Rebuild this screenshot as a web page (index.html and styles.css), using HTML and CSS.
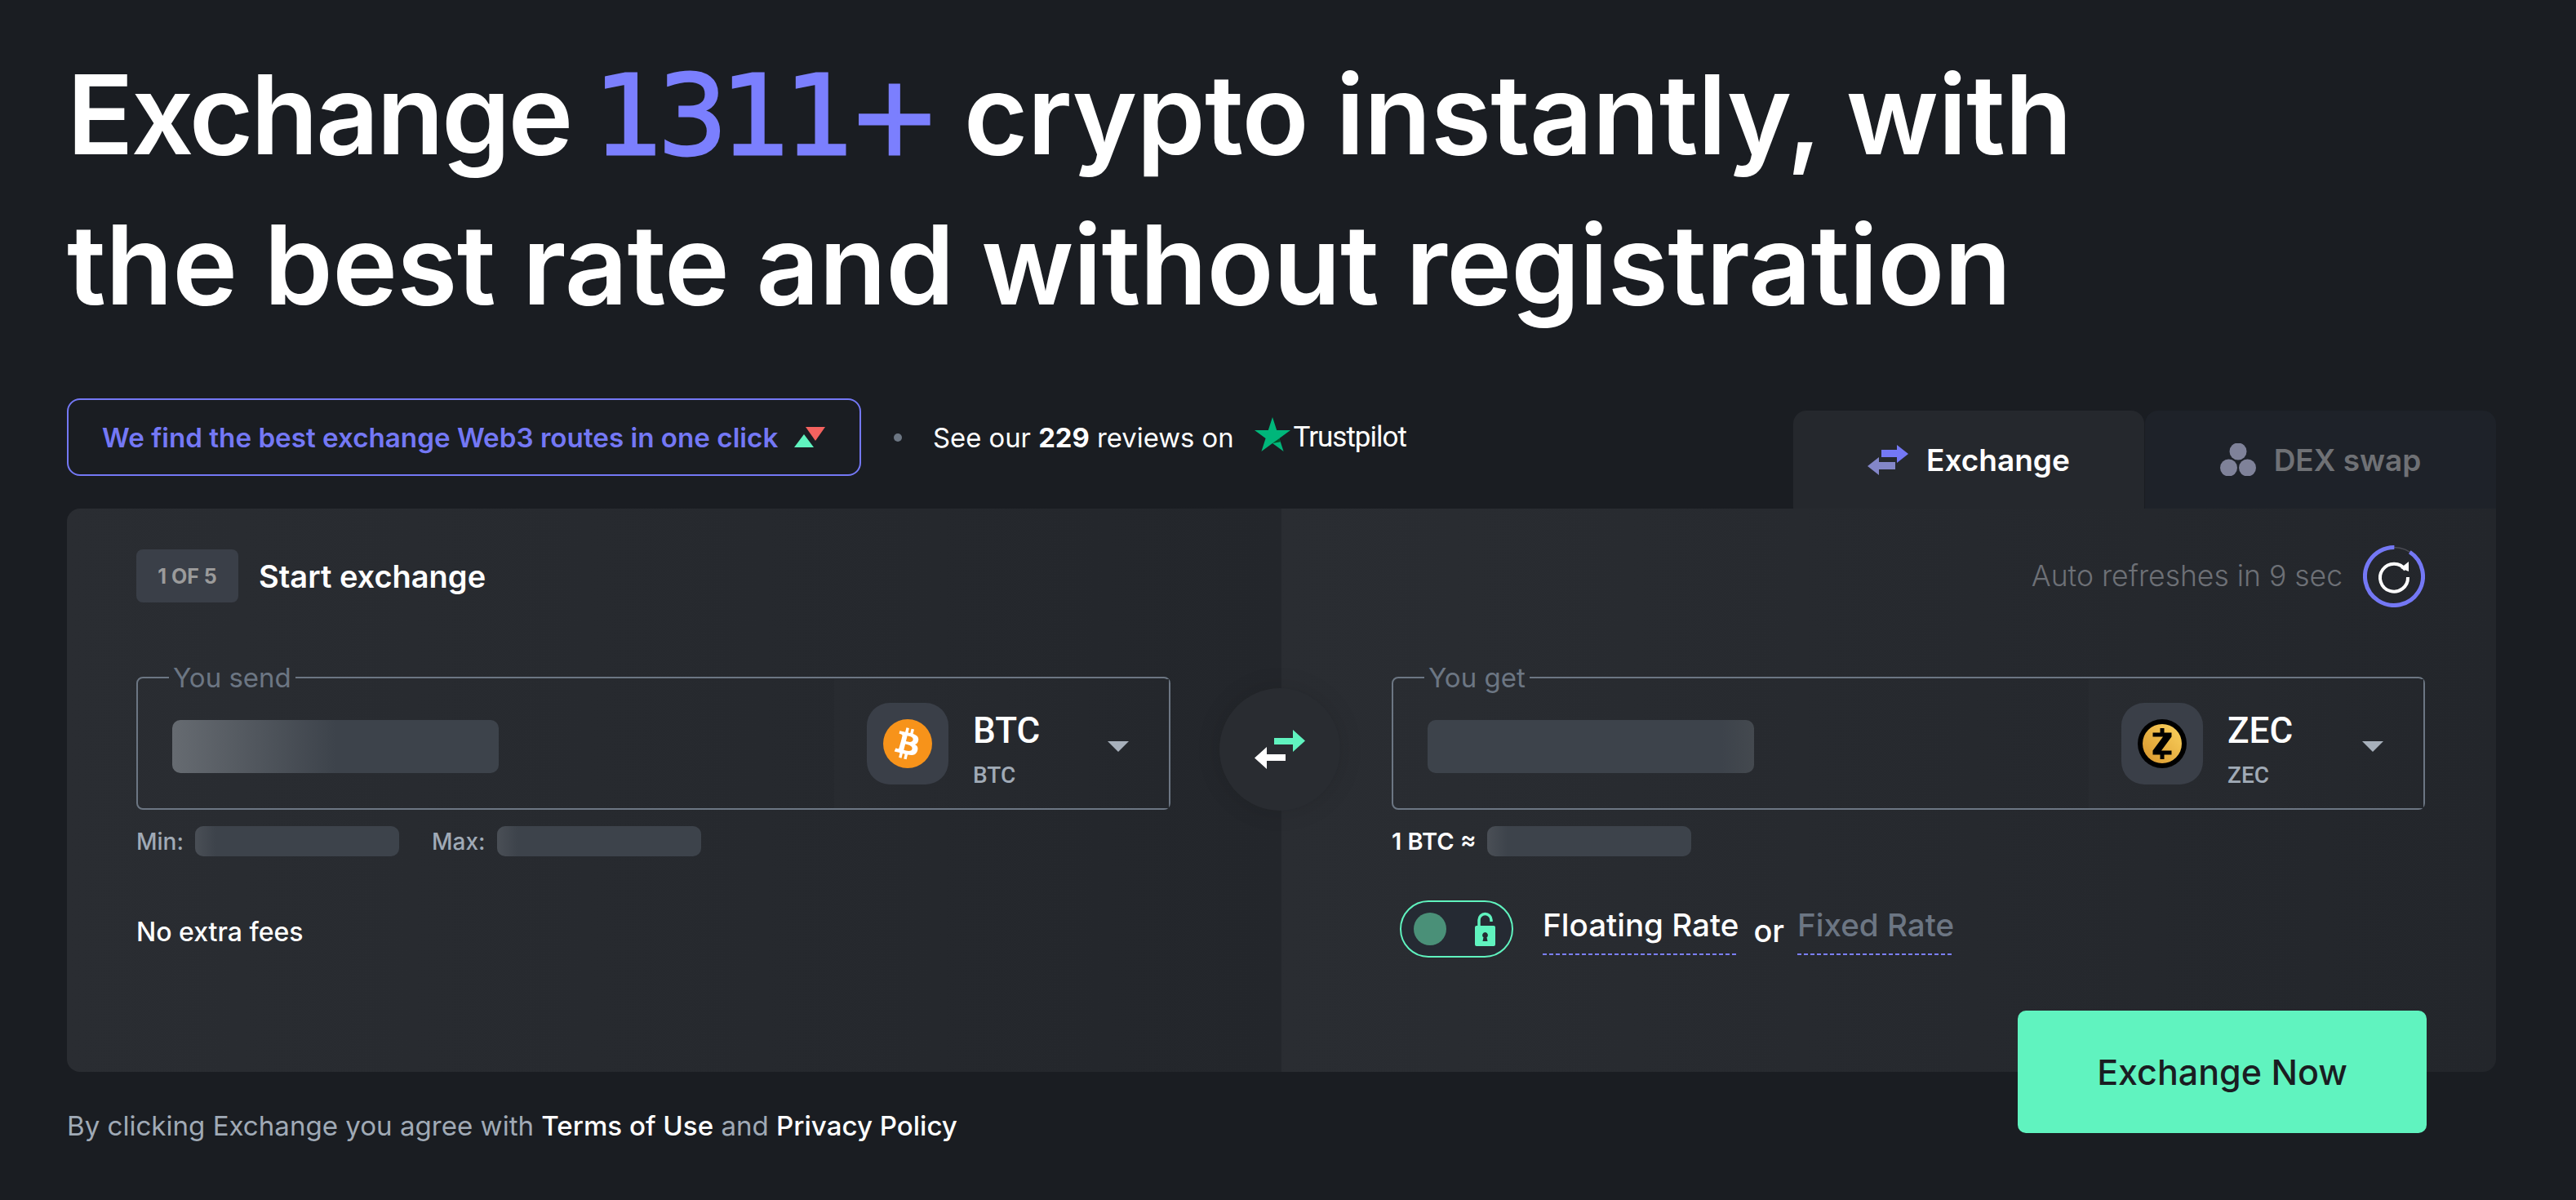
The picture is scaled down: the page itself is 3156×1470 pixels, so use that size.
FILE: index.html
```html
<!DOCTYPE html>
<html lang="en">

<head>
    <meta charset="UTF-8">
    <meta name="viewport" content="width=device-width, initial-scale=1.0">
    <title>Exchange crypto</title>
    <link rel="stylesheet" href="styles.css">
</head>

<body>
    <main class="page">
        <h1 class="headline"><span class="headline-first">Exchange</span> <span class="headline-num">1311+</span> crypto instantly, with<br>the best rate and without registration</h1>

        <!-- Promo and tabs -->
        <div class="top-row">
            <div class="promo">
                <a class="promo-pill" href="#">
                    We find the best exchange Web3 routes in one click
                    <svg class="promo-icon" width="38" height="25" viewBox="0 0 38 25">
                        <polygon points="14,0 38,0 26,17" fill="#f4625f"/>
                        <polygon points="12,9 24,25 0,25" fill="#60f3bf"/>
                    </svg>
                </a>
                <span class="dot"></span>
                <span class="reviews">See our <b>229</b> reviews on</span>
                <svg class="tp-star" width="44" height="42" viewBox="0 0 44 42">
                    <polygon points="22,0 27.2,16 44,16 30.4,25.9 35.6,42 22,32 8.4,42 13.6,25.9 0,16 16.8,16" fill="#00b67a"/>
                    <polygon points="30.400,25.900 31.800,30.200 22,32" fill="#005128"/>
                </svg>
                <span class="tp-name">Trustpilot</span>
            </div>
            <div class="tabs">
                <a class="tab tab-active" href="#">
                    <svg width="50" height="37" viewBox="0 0 50 37">
                        <polygon points="17,6 36,6 36,0 50,11 36,22 36,15 17,15" fill="#7478f5"/>
                        <polygon points="34,21 14,21 14,15 0,26 14,37 14,30 34,30" fill="#8386c8"/>
                    </svg>
                    Exchange
                </a>
                <a class="tab" href="#">
                    <svg width="44" height="40" viewBox="0 0 44 40">
                        <circle cx="22" cy="10" r="10.5" fill="#7f8299"/>
                        <circle cx="10.5" cy="30" r="10.5" fill="#7f8299"/>
                        <circle cx="33.5" cy="30" r="10.5" fill="#7f8299"/>
                    </svg>
                    DEX swap
                </a>
            </div>
        </div>

        <section class="panel">
            <div class="col col-left">
                <div class="col-head">
                    <span class="step">1 OF 5</span>
                    <span class="step-title">Start exchange</span>
                </div>

                <fieldset class="field">
                    <legend>You send</legend>
                    <div class="field-body">
                        <div class="amount"><span class="blur blur-big blur-fade"></span></div>
                        <div class="coin">
                            <span class="coin-box">
                                <svg width="60" height="60" viewBox="0 0 64 64">
                                    <circle cx="32" cy="32" r="32" fill="#f7931a"/>
                                    <path d="M46.1 27.4c.6-4.3-2.6-6.6-7.1-8.1l1.5-5.9-3.6-.9-1.4 5.7c-.9-.2-1.9-.5-2.9-.7l1.4-5.7-3.6-.9-1.5 5.900c-.8-.2-1.500-.4-2.300-.5l-4.900-1.200-.9 3.800s2.600.6 2.600.7c1.500.4 1.700 1.300 1.700 2.100l-1.700 6.700-2.700 9.400c-.2.4-.6 1.100-1.700.8 0 .1-2.600-.7-2.600-.7l-1.800 4.100 4.700 1.200c.9.2 1.700.4 2.600.7l-1.500 6 3.600.9 1.500-5.900c1 .3 1.900.5 2.900.8l-1.500 5.900 3.600.9 1.500-6c6.100 1.200 10.700.7 12.700-4.800 1.600-4.400-.1-7-3.300-8.600 2.300-.5 4.100-2.100 4.600-5.300zm-8.200 11.500c-1.100 4.400-8.600 2-11 1.400l2-7.900c2.400.6 10.200 1.800 9 6.500zm1.100-11.600c-1 4-7.200 2-9.200 1.500l1.800-7.100c2 .5 8.500 1.400 7.400 5.600z" fill="#fff"/>
                                </svg>
                            </span>
                            <span class="coin-text">
                                <span class="coin-code">BTC</span>
                                <span class="coin-net">BTC</span>
                            </span>
                            <span class="caret"></span>
                        </div>
                    </div>
                </fieldset>

                <div class="limits">
                    <span>Min:</span><span class="blur blur-small blur-edge"></span>
                    <span class="limit-max">Max:</span><span class="blur blur-small blur-edge"></span>
                </div>

                <p class="fees">No extra fees</p>
            </div>

            <div class="col col-right">
                <div class="col-head col-head-right">
                    <span class="refresh-text">Auto refreshes in 9 sec</span>
                    <svg class="refresh" width="76" height="76" viewBox="0 0 76 76">
                        <circle cx="38" cy="38" r="35.5" fill="none" stroke="#4b4c55" stroke-width="1.5"/>
                        <circle cx="38" cy="38" r="35.5" fill="none" stroke="#7478f5" stroke-width="5" pathLength="100" stroke-dasharray="91 9" transform="rotate(-57 38 38)"/>
                        <path d="M52 30a17 17 0 1 0 3 9" fill="none" stroke="#fff" stroke-width="4"/>
                        <polygon points="46,28 56,20 56,32" fill="#fff"/>
                    </svg>
                </div>

                <fieldset class="field">
                    <legend>You get</legend>
                    <div class="field-body">
                        <div class="amount"><span class="blur blur-big blur-fade-right"></span></div>
                        <div class="coin">
                            <span class="coin-box">
                                <svg width="60" height="60" viewBox="0 0 60 60">
                                    <defs>
                                        <linearGradient id="zecGold" x1="0" y1="1" x2="1" y2="0">
                                            <stop offset="0" stop-color="#d9952b"/>
                                            <stop offset="1" stop-color="#fbd35f"/>
                                        </linearGradient>
                                    </defs>
                                    <circle cx="30" cy="30" r="30" fill="#000"/>
                                    <circle cx="30" cy="30" r="24" fill="url(#zecGold)"/>
                                    <path d="M27.500 11h5v5.500h9v5L29 38.500h12.500v5h-9V49h-5v-5.500h-9v-5L31 21.500H18.500v-5h9z" fill="#000"/>
                                </svg>
                            </span>
                            <span class="coin-text">
                                <span class="coin-code">ZEC</span>
                                <span class="coin-net">ZEC</span>
                            </span>
                            <span class="caret"></span>
                        </div>
                    </div>
                </fieldset>

                <div class="limits">
                    <span class="rate-label">1 BTC ≈</span><span class="blur blur-small blur-edge"></span>
                </div>

                <div class="rate-row">
                    <span class="toggle">
                        <span class="knob"></span>
                        <svg width="25" height="42" viewBox="0 0 25 42">
                            <path d="M5 20V10a7.500 7.500 0 0 1 15 0v2" fill="none" stroke="#60f3bf" stroke-width="3.500"/>
                            <path fill-rule="evenodd" d="M2 17h21a2 2 0 0 1 2 2v21a2 2 0 0 1-2 2H2a2 2 0 0 1-2-2V19a2 2 0 0 1 2-2zm10.500 8a3.500 3.500 0 0 0-2 6.300L9.500 36h6l-1-4.700a3.500 3.500 0 0 0-2-6.300z" fill="#60f3bf"/>
                        </svg>
                    </span>
                    <a class="rate rate-on" href="#">Floating Rate</a>
                    <span class="rate-or">or</span>
                    <a class="rate rate-off" href="#">Fixed Rate</a>
                </div>
            </div>

            <button class="swap" type="button">
                <svg width="62" height="48" viewBox="0 0 62 48">
                    <polygon points="24,10 47,10 47,0 62,13.500 47,27 47,18 24,18" fill="#60f3bf"/>
                    <polygon points="38,30 15,30 15,21 0,34.500 15,48 15,38 38,38" fill="#fff"/>
                </svg>
            </button>
        </section>

        <div class="bottom-row">
            <p class="terms">By clicking Exchange you agree with <a href="#">Terms of Use</a> and <a href="#">Privacy Policy</a></p>
            <button class="submit" type="button">Exchange Now</button>
        </div>
    </main>
</body>

</html>
```
FILE: styles.css
```css
body {
    margin: 0;
    background-color: #1a1d22;
    color: #fff;
    font-family: 'Inter', 'Liberation Sans', sans-serif;
}

a {
    color: inherit;
    text-decoration: none;
}

.page {
    padding: 48px 98px 0 82px;
}

.headline {
    margin: 0;
    height: 362px;
    font-size: 135px;
    line-height: 184px;
    font-weight: 560;
    letter-spacing: -0.7px;
    white-space: nowrap;
}

.headline-first {
    letter-spacing: -3px;
}

.headline-num {
    margin: 0 3px 0 -5px;
    color: #7b7ffe;
    font-family: 'DejaVu Sans', sans-serif;
    font-weight: 400;
    letter-spacing: -8px;
    line-height: 0;
    -webkit-text-stroke: 3px #7b7ffe;
}

.top-row {
    display: flex;
    justify-content: space-between;
    height: 135px;
    margin-top: 78px;
}

.promo {
    display: flex;
    align-items: center;
    align-self: flex-start;
    height: 95px;
}

.promo-pill {
    display: flex;
    align-items: center;
    box-sizing: border-box;
    width: 973px;
    height: 95px;
    padding-left: 41px;
    border: 2px solid #7478f5;
    border-radius: 16px;
    color: #7478f5;
    font-size: 33.2px;
    font-weight: 600;
    white-space: nowrap;
}

.promo-icon {
    margin-left: 20px;
}

.dot {
    width: 10px;
    height: 10px;
    margin: 0 38px 0 40px;
    border-radius: 50%;
    background-color: #6c7683;
}

.reviews {
    font-size: 32.8px;
    white-space: nowrap;
}

.tp-star {
    margin: 0 4px 8px 25px;
}

.tp-name {
    font-family: 'Roboto', sans-serif;
    font-size: 35px;
    font-weight: 400;
    letter-spacing: -1px;
}

.tabs {
    display: flex;
    align-self: flex-end;
    gap: 1px;
    height: 120px;
}

.tab {
    display: flex;
    align-items: center;
    justify-content: center;
    gap: 22px;
    box-sizing: border-box;
    width: 430px;
    height: 120px;
    border-radius: 16px 16px 0 0;
    background-color: #1e2229;
    color: #6f7175;
    font-size: 37px;
    font-weight: 600;
}

.tab-active {
    background-color: #25282d;
    color: #fff;
}

.panel {
    position: relative;
    display: grid;
    grid-template-columns: 1488px 1488px;
    height: 690px;
    border-radius: 16px 0 16px 16px;
    overflow: hidden;
}

.col {
    box-sizing: border-box;
    padding-top: 50px;
    background: linear-gradient(90deg, #2a2d32, #23262b);
}

.col-left {
    padding-left: 85px;
    padding-right: 136px;
}

.col-right {
    padding-left: 135px;
    padding-right: 87px;
}

.col-head {
    display: flex;
    align-items: center;
    height: 65px;
}

.col-head-right {
    justify-content: flex-end;
}

.step {
    display: flex;
    align-items: center;
    justify-content: center;
    width: 125px;
    height: 65px;
    margin-right: 25px;
    border-radius: 8px;
    background-color: #3a3f48;
    color: #9b9b9b;
    font-size: 25px;
    font-weight: 700;
}

.step-title {
    font-size: 38px;
    font-weight: 600;
}

.refresh-text {
    margin-right: 25px;
    color: #6d7076;
    font-size: 35.5px;
    font-weight: 300;
}

.refresh {
    flex: none;
}

.field {
    box-sizing: border-box;
    height: 179px;
    margin: 75px 0 0;
    padding: 0;
    border: 2px solid #6c7683;
    border-radius: 8px;
    background: none;
}

.field legend {
    margin-left: 38px;
    padding: 0 5px;
    color: #6c7683;
    font-size: 33px;
    line-height: 34px;
}

.field-body {
    display: flex;
    justify-content: space-between;
    height: 158px;
    margin-top: -15px;
}

.amount {
    display: flex;
    align-items: center;
    padding: 6px 0 0 42px;
}

.blur {
    display: block;
    border-radius: 10px;
    background-color: #3d434b;
}

.blur-big {
    width: 400px;
    height: 65px;
}

.blur-small {
    width: 250px;
    height: 37px;
}

.blur-fade {
    background: linear-gradient(90deg, #666b71, #3d434b 50%);
}

.blur-fade-right {
    background: linear-gradient(90deg, #3d434b 90%, #44494f);
}

.blur-edge {
    background: linear-gradient(90deg, #4a4f56, #3d434b 10%);
}

.coin {
    display: flex;
    align-items: center;
    box-sizing: border-box;
    width: 410px;
    padding-left: 40px;
    background: linear-gradient(90deg, #282b30, #24272c);
}

.coin-box {
    display: flex;
    align-items: center;
    justify-content: center;
    width: 100px;
    height: 100px;
    border-radius: 28px;
    background-color: #3a3f48;
}

.coin-text {
    display: flex;
    flex-direction: column;
    width: 165px;
    margin-left: 30px;
    padding-top: 14px;
    font-family: 'Roboto', sans-serif;
}

.coin-code {
    font-size: 44px;
    font-weight: 500;
    line-height: 52px;
}

.coin-net {
    margin-top: 12px;
    color: #a0aab6;
    font-size: 28px;
    font-weight: 500;
    line-height: 34px;
}

.caret {
    width: 0;
    height: 0;
    margin-top: 6px;
    border-top: 13px solid #a7b0bb;
    border-left: 13px solid transparent;
    border-right: 13px solid transparent;
}

.limits {
    display: flex;
    align-items: center;
    height: 37px;
    margin-top: 20px;
    color: #a0aab6;
    font-size: 28px;
    font-weight: 500;
}

.limits .blur {
    margin-left: 14px;
}

.limit-max {
    margin-left: 40px;
}

.rate-label {
    color: #fff;
    font-size: 29px;
    font-weight: 600;
}

.fees {
    margin: 73px 0 0;
    font-size: 32px;
    font-weight: 500;
}

.rate-row {
    display: flex;
    align-items: center;
    height: 70px;
    margin: 54px 0 0 10px;
}

.toggle {
    display: flex;
    align-items: center;
    justify-content: space-between;
    box-sizing: border-box;
    width: 139px;
    height: 70px;
    padding: 0 20px 0 15px;
    border: 2px solid #60f3bf;
    border-radius: 35px;
    background-color: #252a33;
}

.knob {
    width: 40px;
    height: 40px;
    border-radius: 50%;
    background-color: #4a9078;
}

.rate {
    margin-top: 4px;
    padding-bottom: 14px;
    background: repeating-linear-gradient(90deg, #7b7ffe 0 5px, transparent 5px 8px) left bottom / 100% 2px no-repeat;
    font-size: 38.6px;
    font-weight: 500;
    line-height: 46px;
}

.rate-on {
    margin-left: 36px;
}

.rate-off {
    color: #6c7683;
}

.rate-or {
    margin: 4px 16px 0 18px;
    font-size: 38px;
    font-weight: 500;
}

/* circle sits over the split between the two columns */
.swap {
    position: absolute;
    top: 220px;
    left: 1412px;
    display: flex;
    align-items: center;
    justify-content: center;
    width: 148px;
    height: 150px;
    padding: 0;
    border: 0;
    border-radius: 50%;
    background-color: #292c31;
    box-shadow: 0 0 30px rgba(0, 0, 0, 0.12);
}

.bottom-row {
    display: flex;
    justify-content: space-between;
    align-items: flex-start;
    margin-top: -75px;
    padding-right: 85px;
    position: relative;
}

.terms {
    margin: 121px 0 0;
    color: #a0aab6;
    font-size: 33.1px;
    font-weight: 400;
}

.terms a {
    color: #fff;
    font-weight: 500;
}

.submit {
    width: 501px;
    height: 150px;
    border: 0;
    border-radius: 10px;
    background-color: #60f3bf;
    color: #1a1d22;
    font-family: inherit;
    font-size: 43px;
    font-weight: 500;
}
```
